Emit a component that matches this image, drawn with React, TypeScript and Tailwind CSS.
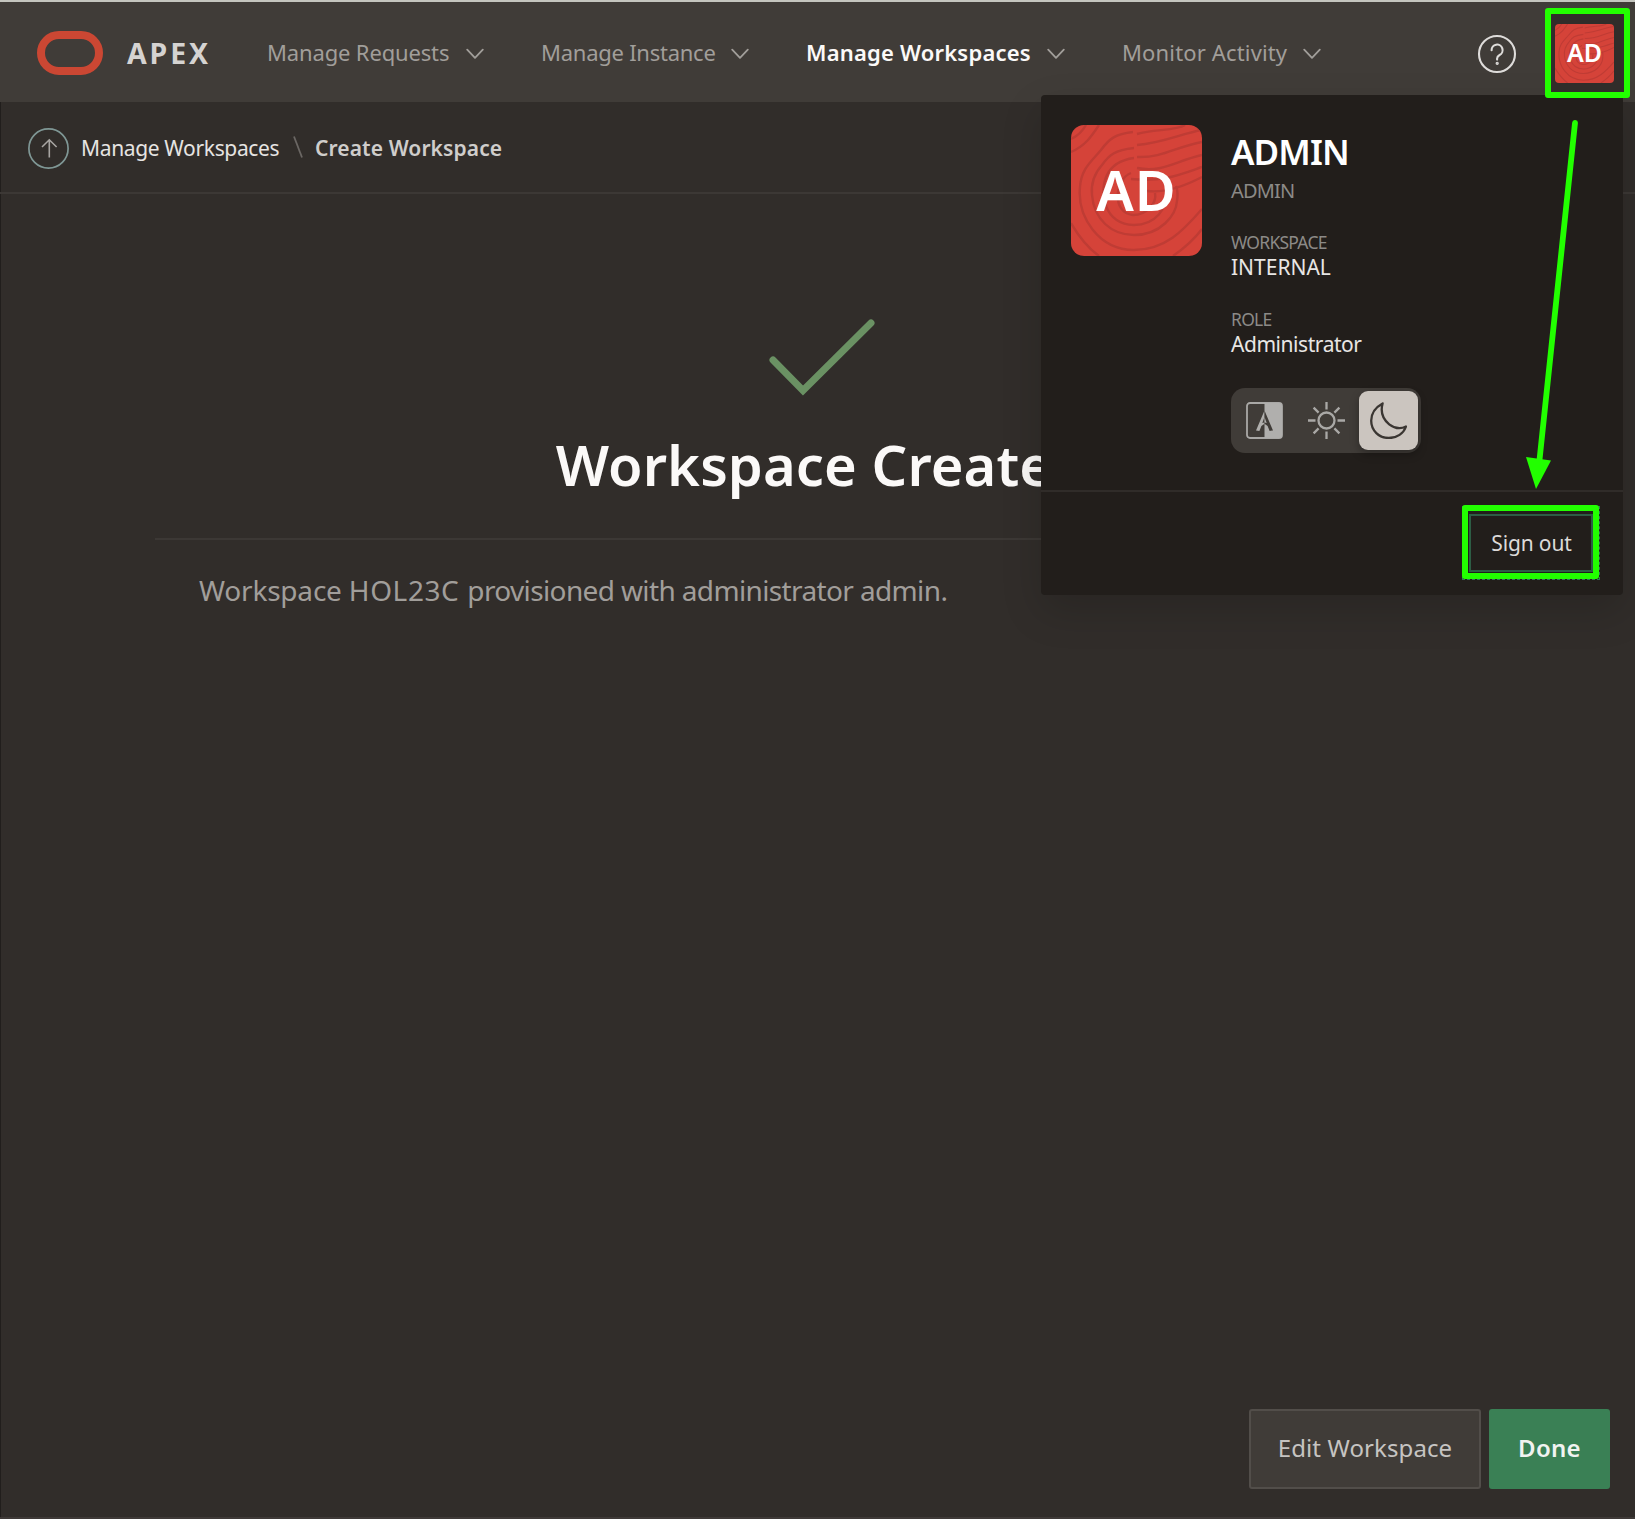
import React from "react";

type IconProps = { className?: string };

function Chevron({ className = "" }: IconProps) {
  return (
    <svg className={`h-[12px] w-[18px] shrink-0 ${className}`} viewBox="0 0 18 12" fill="none" stroke="#a19e9a" strokeWidth="1.8" strokeLinecap="round" strokeLinejoin="round">
      <path d="M1.2 1.6 9 9.8l7.8-8.2" />
    </svg>
  );
}

function Swirl() {
  return (
    <svg className="absolute inset-0 h-full w-full opacity-70" viewBox="0 0 131 131" fill="none" stroke="#b53933" strokeWidth="2.4">
      <path d="M0 27C14 21 20 12 28 0" />
      <path d="M0 14C7 11 11 7 15 0" />
      <path d="M62 7C44 9 38 14 30 25C20 37 10 44 9 62C6 92 28 125 63 125C94 125 112 106 131 84" />
      <path d="M63 23C44 25 38 30 31 40C22 50 20 60 21 70C23 94 40 110 63 110C90 110 105 90 106 76C107 70 107 66 105 61" />
      <path d="M63 33C48 35 40 42 36 50C28 66 32 99 63 100C84 100 97 84 95 66" />
      <path d="M60 48C44 54 40 88 62 90C76 90 86 78 84 68" />
      <path d="M0 98C8 112 16 122 28 131" />
      <path d="M131 104C122 116 112 124 102 131" />
      <path d="M66 9C84 4 104 6 114 0" />
      <path d="M66 20C92 18 112 8 131 5" />
      <path d="M66 32C92 33 104 22 131 17" />
      <path d="M66 43C92 48 104 36 131 30" />
      <path d="M60 54C92 57 108 50 131 42" />
      <path d="M76 66C92 68 112 62 131 52" />
    </svg>
  );
}

function CompassSplit() {
  return (
    <svg className="h-[37px] w-[37px] shrink-0" viewBox="0 0 37 37">
      <rect x="1" y="1" width="35" height="35" rx="3" fill="none" stroke="#a9a8a6" strokeWidth="1.8" />
      <path d="M18.5 1H33a3 3 0 0 1 3 3v29a3 3 0 0 1-3 3H18.5z" fill="#b0afad" />
      <path d="M18.5 8.5 10 28.5l3.4.4 2-5 3.1-2.2z" fill="#b0afad" />
      <path d="M18.5 8.5 27 28.5l-3.4.4-2-5-3.1-2.2z" fill="#403c38" />
      <path d="M18.5 15v5.500l-2.200.5z" fill="#403c38" />
      <path d="M18.5 15v5.500l2.200.5z" fill="#b0afad" />
    </svg>
  );
}

function Sun() {
  return (
    <svg className="h-[37px] w-[37px]" viewBox="0 0 37 37" fill="none" stroke="#a9a8a6" strokeWidth="2.3">
      <circle cx="18.5" cy="18.5" r="8" />
      <path d="M18.5 0v7.5M18.5 29.500v7.500M0 18.500h7.500M29.500 18.500h7.500M5.600 5.600l5 5M26.400 26.400l5 5M5.600 31.400l5-5M26.400 10.600l5-5" />
    </svg>
  );
}

function Moon() {
  return (
    <svg className="h-[37px] w-[37px]" viewBox="0 0 37 37" fill="none" stroke="#3a3632" strokeWidth="2.3" strokeLinejoin="round">
      <path d="M12.600 1.400C5 5.500 1.200 12 1.200 18.800C1.200 28.600 9 36 18.800 36C27 36 33.600 31.500 36 24.500C31 27 24.500 26.400 19.200 22.300C12.600 17 10.400 9.500 12.600 1.400z" />
    </svg>
  );
}

function NavItem({ label, className }: { label: string; className: string }) {
  return (
    <a className={`flex shrink-0 items-center justify-between whitespace-nowrap text-[22px] leading-[30px] ${className}`}>
      <span className="-mt-[1px]">{label}</span>
      <Chevron className="mt-[4px]" />
    </a>
  );
}

function Header() {
  return (
    <header className="flex h-[102px] items-center border-t-2 border-[#c4c5be] bg-[#403c38] pl-[37px] pr-[10px]">
      <div className="mt-[2px] h-[44px] w-[66px] shrink-0 rounded-full border-[8px] border-[#cb4733]" />
      <span className="ml-[24px] mt-[2px] w-[140px] shrink-0 text-[28.5px] font-bold leading-[40px] tracking-[2.9px] text-[#d5d3d1]">APEX</span>
      <nav className="flex shrink-0 gap-[57px] text-[#a19e9a]">
        <NavItem label="Manage Requests" className="w-[217px] -tracking-[0.15px]" />
        <NavItem label="Manage Instance" className="w-[208px] -tracking-[0.25px]" />
        <NavItem label="Manage Workspaces" className="w-[259px] font-semibold tracking-[0.2px] text-[#fbf9f8]" />
        <NavItem label="Monitor Activity" className="w-[199px] tracking-[0.15px]" />
      </nav>
      <svg className="ml-auto mt-[4px] h-[40px] w-[40px] shrink-0" viewBox="0 0 40 40" fill="none" stroke="#dedcda" strokeWidth="2.1" strokeLinecap="round">
        <circle cx="20" cy="20" r="18" />
        <path d="M14.600 16.300a5.500 5.500 0 1 1 8 4.700c-1.800 1-2.500 1.700-2.500 3.600v1" />
        <circle cx="20.200" cy="29.300" r="0.600" fill="#dedcda" />
      </svg>
      <div className="relative z-10 ml-[34px] mt-[3px] flex h-[79px] w-[74px] shrink-0 items-center bg-[#312d2a] pl-[4px]">
        <div className="relative flex h-[59px] w-[59px] items-center justify-center overflow-hidden rounded-[4px] bg-[#d5433a]">
          <Swirl />
          <span className="relative -mt-[3px] text-[25px] font-semibold leading-none text-white">AD</span>
        </div>
        <div className="absolute -left-[6px] -top-[6px] h-[90px] w-[85px] rounded-[3px] border-[6px] border-[#22ff00]" />
      </div>
    </header>
  );
}

function Breadcrumb() {
  return (
    <div className="flex h-[92px] items-center border-b-2 border-[#3c3835] pl-[27px] text-[21px] leading-[30px]">
      <svg className="mt-[2px] h-[43px] w-[43px] shrink-0" viewBox="0 0 43 43" fill="none">
        <circle cx="21.500" cy="21.500" r="19.600" stroke="#7f9795" strokeWidth="1.700" />
        <path d="M22.300 30.500V12.800M15 20l7.300-7.200L29.600 20" stroke="#a8a5a2" strokeWidth="1.600" />
      </svg>
      <a className="ml-[11px] mt-[2px] w-[212px] whitespace-nowrap -tracking-[0.35px] text-[#e6e4e2]">Manage Workspaces</a>
      <svg className="-mt-[1px] h-[22px] w-[10px] shrink-0" viewBox="0 0 10 22" fill="none" stroke="#6b6764" strokeWidth="1.800">
        <path d="M1 .500 9 21.500" />
      </svg>
      <span className="ml-[12px] mt-[2px] whitespace-nowrap font-semibold tracking-[0.1px] text-[#cfcdcb]">Create Workspace</span>
    </div>
  );
}

function Field({ label, value, className }: { label: string; value: string; className: string }) {
  return (
    <div className={className}>
      <div className="text-[17.5px] leading-[25px] -tracking-[0.75px] text-[#8c8a87]">{label}</div>
      <div className="text-[21px] leading-[24px] text-[#e8e6e4]">{value}</div>
    </div>
  );
}

function AccountMenu() {
  return (
    <div className="absolute left-[1041px] top-[95px] flex h-[500px] w-[582px] flex-col rounded-[4px] bg-[#221e1b] shadow-[0_16px_40px_rgba(0,0,0,0.16)]">
      <div className="flex h-[395px] gap-[29px] pl-[30px] pt-[30px]">
        <div className="relative flex h-[131px] w-[131px] shrink-0 items-center justify-center overflow-hidden rounded-[13px] bg-[#d5433a]">
          <Swirl />
          <span className="relative -mt-[4px] text-[56px] font-semibold leading-none tracking-[1px] text-white">AD</span>
        </div>
        <div className="flex flex-col items-start">
          <div className="mt-[7px] text-[35px] font-semibold leading-[40px] -tracking-[0.9px] text-white">ADMIN</div>
          <div className="mt-[7px] text-[20px] leading-[24px] -tracking-[0.8px] text-[#8c8a87]">ADMIN</div>
          <Field label="WORKSPACE" value="INTERNAL" className="mt-[27px]" />
          <Field label="ROLE" value="Administrator" className="mt-[28px] -tracking-[0.45px]" />
          <div className="mt-[32px] flex h-[65px] w-[190px] items-center rounded-[14px] bg-[#403c38] pl-[15px]">
            <CompassSplit />
            <div className="ml-[25px] h-[37px] shrink-0"><Sun /></div>
            <div className="ml-[14px] flex h-[59px] w-[59px] shrink-0 items-center justify-center rounded-[9px] bg-[#cbc5bf] shadow-[0_4px_10px_rgba(0,0,0,0.3)]">
              <Moon />
            </div>
          </div>
        </div>
      </div>
      <div className="flex flex-1 justify-end border-t-2 border-[#302c29] pr-[24px] pt-[13px]">
        <button className="relative flex h-[74px] w-[137px] items-center justify-center text-[21px] -tracking-[0.15px] text-[#dcdad8]">
          <span className="absolute -bottom-[1px] -right-[1px] left-0 top-[1px] border border-dashed border-[#2f7a56]" />
          <span className="absolute inset-0 rounded-[3px] border-[6px] border-[#22ff00]" />
          <span className="absolute bottom-[7px] left-[7px] right-[6px] top-[9px] border-2 border-[#2d5d45]" />
          <span className="ml-[2px] mt-[3px]">Sign out</span>
        </button>
      </div>
      <svg className="absolute left-[479px] top-[20px] h-[380px] w-[70px]" viewBox="0 0 70 380">
        <path d="M55 8 19.500 345" stroke="#22ff00" strokeWidth="5.800" strokeLinecap="round" />
        <path d="M6 342 31 345.500 16 374z" fill="#22ff00" />
      </svg>
    </div>
  );
}

export default function App() {
  return (
    <div className="relative flex h-[1519px] w-[1635px] flex-col overflow-hidden bg-[#312d2a] font-['Noto_Sans',sans-serif] shadow-[inset_1px_0_0_#211e1c]">
      <Header />
      <Breadcrumb />
      <main className="ml-[155px] flex w-[1333px] flex-1 flex-col">
        <div className="flex h-[346px] flex-col items-center border-b-2 border-[#3c3835]">
          <svg className="mt-[123px] h-[80px] w-[110px]" viewBox="0 0 110 80" fill="none" stroke="#6a9163" strokeWidth="7" strokeLinecap="round">
            <path d="M6 43 36 73.500 104 6" />
          </svg>
          <h1 className="mt-[27px] whitespace-nowrap text-[56px] font-semibold leading-[80px] tracking-[0.1px] text-[#fbf9f8]">Workspace Created</h1>
        </div>
        <p className="mt-[28px] pl-[44px] text-[28px] leading-[44px] -tracking-[0.63px] text-[#a19e9a]">
          <span className="-tracking-[0.2px]">Workspace </span>
          <span className="tracking-[0.6px]">HOL23C </span>
          provisioned with administrator admin.
        </p>
      </main>
      <footer className="flex h-[110px] justify-end gap-[8px] border-b-2 border-[#3f3a38] pr-[25px]">
        <button className="h-[80px] w-[232px] rounded-[3px] border-2 border-[#524e4a] bg-[#403c38] pb-[3px] text-[24px] tracking-[0.1px] text-[#c6c4c2]">Edit Workspace</button>
        <button className="h-[80px] w-[121px] rounded-[3px] bg-[#3a8055] pb-[3px] text-[24px] font-semibold tracking-[0.3px] text-[#f1f3f1]">Done</button>
      </footer>
      <AccountMenu />
    </div>
  );
}
